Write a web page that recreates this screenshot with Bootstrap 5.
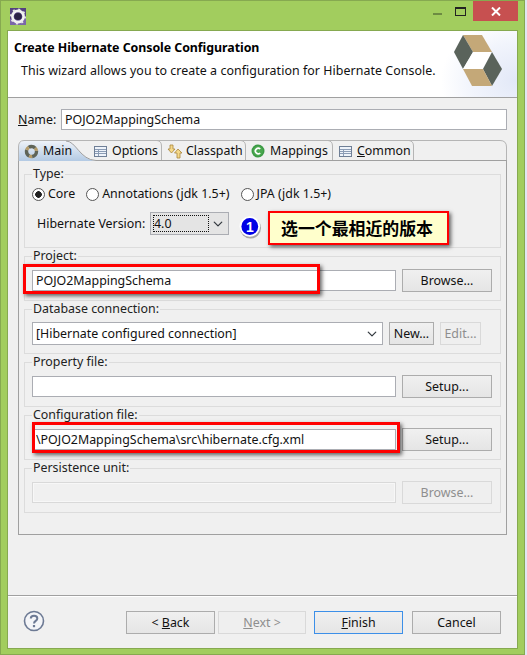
<!DOCTYPE html>
<html lang="en">
<head>
<meta charset="utf-8">
<title>Create Hibernate Console Configuration</title>
<link href="https://cdn.jsdelivr.net/npm/bootstrap@5.3.0/dist/css/bootstrap.min.css" rel="stylesheet">
<style>
html,body{margin:0;padding:0;background:#dfe6f2;overflow:hidden}
body{width:527px;height:655px;font:12.4px/16px "Noto Sans","Noto Sans CJK SC",sans-serif;color:#111}
.ewin{width:525px;height:655px;background:#a2cd5e;border:1px solid #86a950;position:relative;display:flex;flex-direction:column}
.ttl{height:29px;flex:none;display:flex;align-items:flex-start;padding-left:9px}
.ttl-ico{margin-top:7px}
.ttl-btns{margin-left:auto;display:flex;align-items:flex-start;padding-right:6px}
.tb-min{width:9px;height:2px;background:#6d8b42;margin-top:12px;margin-right:13px}
.tb-max{width:11px;height:9px;border:1px solid #222;border-top-width:2px;margin-top:6px;margin-right:7px}
.tb-close{width:45px;height:20px;background:#c75050;display:flex;align-items:center;justify-content:center}
.dlg{margin-left:6px;width:511px;height:619px;border:1px solid #86a950;background:#f0f0f0;display:flex;flex-direction:column}
.hdr{height:67px;flex:none;background:#fff;border-bottom:1px solid #a0a0a0;position:relative;padding:8px 0 0 6px}
.hdr-title{font-weight:700;line-height:18px;color:#000;font-size:12.4px;letter-spacing:-.05px;position:relative}
.hdr-desc{margin-top:5px;padding-left:7px;line-height:18px;letter-spacing:.06px;position:relative}
.hdr-art{position:absolute;right:0;top:0}
.mainp{flex:1;padding:11px 10px 0;min-height:0}
.name-row{display:flex;align-items:center;height:21px}
.name-lab{width:43px;flex:none}
.ctl{border:1px solid #abadb3;border-radius:0;height:21px;padding:0 3px;font:inherit;color:#111;background:#fff;box-shadow:none;min-height:0}
.ctl:disabled{background:#f0f0f0;border-color:#d9d9d9;box-shadow:inset 0 0 0 1px #f7f7f7}
.folder{margin-top:10px;width:489px;height:395px;position:relative;display:flex;flex-direction:column}
.tabs{height:20px;flex:none;position:relative}
.tabs-bg{position:absolute;left:0;top:0}
.tab-t{position:absolute;top:2px;display:flex;align-items:center;gap:5px;line-height:18px}
.tab-a{left:6px;gap:4px}.tab-b{left:76px}.tab-c{left:149px;gap:4px}.tab-d{left:233px}.tab-e{left:321px}
.pane{flex:1;border:1px solid #a0a0a0;border-top:0;padding:7px 5px 0;min-height:0}
.grp{border:1px solid #dcdcdc;margin:0 0 1px;padding:0 7px;height:52px;position:relative;display:block;min-width:0}
.grp>legend{float:none;width:auto;font:inherit;line-height:14px;margin:0;padding:0 1px;color:#222}
.grp-type{height:81px}
.gline{display:flex;gap:6px;align-items:center;margin-top:6px}
.gline .ctl-w{width:364px;flex:none}
.pbtn{border:1px solid #acacac;border-radius:0;background:linear-gradient(#f0f0f0,#e5e5e5);height:23px;padding:0;font:inherit;color:#111;line-height:19px;--bs-btn-hover-bg:#e5e5e5}
.pbtn:disabled{opacity:1;background:#efefef;border-color:#d9d9d9;color:#8e8e8e}
.w90{width:90px}
.radios{display:flex;align-items:center;height:18px;margin-top:4px}
.rad{display:flex;align-items:center;gap:3px;margin:0 11px 0 0;padding:0;min-height:0}
.rad .form-check-input{width:13px;height:13px;margin:0;float:none;border:1px solid #555;background-color:#fff;box-shadow:none}
.rad .form-check-input:checked{background-image:radial-gradient(circle,#222 0,#222 3px,transparent 3.6px);border-color:#555}
.hv{display:flex;align-items:center;margin-top:9px;padding-left:5px;height:23px}
.hv-lab{width:113px;flex:none}
.sel-wrap{position:relative;width:79px}
.sel-wrap::after{content:"";position:absolute;left:3px;top:3px;width:56px;height:17px;border:1px dotted #111;pointer-events:none}
.esel{border:1px solid #abadb3;border-radius:0;height:23px;padding:0 16px 0 3px;font:inherit;color:#111;box-shadow:none;background-color:#fff;background-size:12px 10px;background-position:right 4px center;min-height:0}
.sel-wrap .esel{background-color:#e4e4e4}
.dbsel{width:351px;flex:none}
.sm-new{width:45px}.sm-edit{width:41px}
.foot{height:53px;flex:none;border-top:1px solid #a0a0a0;box-shadow:inset 0 1px 0 #fff;display:flex;align-items:flex-start;padding-top:15px;padding-left:15px}
.foot>svg{margin-top:-1px}
.fbtn{width:89px}
.fbtn-next{width:88px;margin-left:3px}
.fbtn-fin{margin-left:8px}
.fbtn-can{margin-left:9px}
.fbtn-blue{border-color:#3c8fe8}
.fbtns{margin-left:auto;display:flex;padding-right:16px}
.u{text-decoration:underline}
.redbox{position:absolute;border:3px solid #f00;box-shadow:2px 2px 4px rgba(0,0,0,.6);pointer-events:none}
.rb1{left:23px;top:264px;width:297px;height:30px}
.rb2{left:32px;top:422px;width:368px;height:31px}
.callout{position:absolute;left:268px;top:211px;width:181px;height:34px;background:#ffc;border:2px solid #f00;box-shadow:2px 2px 4px rgba(0,0,0,.6);font:700 16.9px/30px "Noto Sans CJK SC",sans-serif;color:#000;padding-left:11px;white-space:nowrap}
.numdot{position:absolute;left:239px;top:215px;width:23px;height:24px}
</style>
</head>
<body>
<div class="ewin">
  <div class="ttl">
    <svg class="ttl-ico" width="16" height="17" viewBox="0 0 16 17"><rect width="16" height="17" fill="#54427f"/><rect y="11" width="16" height="6" fill="#7a66a8"/><circle cx="8" cy="8.5" r="5.6" fill="none" stroke="#f2f2f2" stroke-width="2.6"/><circle cx="8" cy="8.5" r="7" fill="none" stroke="#e8e8e8" stroke-width="2" stroke-dasharray="2 3.5"/><circle cx="8" cy="8.5" r="3.6" fill="#2a2145"/></svg>
    <div class="ttl-btns">
      <div class="tb-min"></div>
      <div class="tb-max"></div>
      <div class="tb-close"><svg width="10" height="9" viewBox="0 0 10 9"><path d="M1 .5 9 8.5M9 .5 1 8.5" stroke="#fff" stroke-width="2"/></svg></div>
    </div>
  </div>
  <div class="dlg">
    <div class="hdr">
      <svg class="hdr-art" width="80" height="66" viewBox="0 0 80 66">
        <defs><radialGradient id="hg" cx="1" cy=".75" r=".95"><stop offset="0" stop-color="#e2e8f7"/><stop offset=".6" stop-color="#f1f4fc"/><stop offset="1" stop-color="#fff"/></radialGradient></defs>
        <rect width="80" height="66" fill="url(#hg)"/>
        <g transform="translate(-437,-31)">
          <path d="M463 35H482L492 52H473Z" fill="#c4a878"/>
          <path d="M463 35 473 52 463 69 454 52Z" fill="#5a635b"/>
          <path d="M473 52H492L483 69H463Z" fill="#fff"/>
          <path d="M492 52 502 69 492 86 483 69Z" fill="#5a635b"/>
          <path d="M463 69H483L492 86H472Z" fill="#c4a878"/>
        </g>
      </svg>
      <div class="hdr-title">Create Hibernate Console Configuration</div>
      <div class="hdr-desc">This wizard allows you to create a configuration for Hibernate Console.</div>
    </div>
    <div class="mainp">
      <div class="name-row">
        <span class="name-lab"><span class="u">N</span>ame:</span>
        <input class="form-control ctl flex-fill" value="POJO2MappingSchema">
      </div>
      <div class="folder">
        <div class="tabs">
          <svg class="tabs-bg" width="489" height="21" viewBox="0 0 489 21">
            <defs><linearGradient id="tg" x1="0" y1="0" x2="0" y2="1"><stop offset="0" stop-color="#eef2f8"/><stop offset="1" stop-color="#b3cae4"/></linearGradient></defs>
            <path d="M.5 21V7Q.5 1 6 1H48C58 1 62 20 78 21Z" fill="url(#tg)"/>
            <path d="M.5 21V7Q.5 .5 6 .5H482Q488.5 .5 488.5 7V21" fill="none" stroke="#b5b5b5"/>
            <path d="M48 1C58 1 62 20 78 20.5H489" fill="none" stroke="#a0a0a0"/>
            <path d="M139 .5Q143.5 1 143.5 6V20M223 .5Q227.5 1 227.5 6V20M310 .5Q314.5 1 314.5 6V20M391 .5Q395.5 1 395.5 6V20" fill="none" stroke="#b5b5b5"/>
          </svg>
          <div class="tab-t tab-a">
            <svg width="15" height="15" viewBox="0 0 15 15"><circle cx="7.5" cy="7.5" r="5" fill="none" stroke="#5f6458" stroke-width="3.4" stroke-dasharray="7 3"/><circle cx="7.5" cy="7.5" r="5" fill="none" stroke="#b49a66" stroke-width="3.4" stroke-dasharray="3 7" stroke-dashoffset="-7"/></svg>
            <span>Main</span>
          </div>
          <div class="tab-t tab-b">
            <svg width="13" height="11" viewBox="0 0 13 11"><rect x=".5" y=".5" width="12" height="10" fill="#eef3fa" stroke="#6f7f96"/><path d="M1 3.5H12M1 5.5H12M1 7.5H12M4.5 3V10" stroke="#8b9cb5" stroke-width="1"/></svg>
            <span>Options</span>
          </div>
          <div class="tab-t tab-c">
            <svg width="15" height="15" viewBox="0 0 15 15"><path d="M3 1H6V5H8L4.500 9 1 5H3Z" fill="#f5d98a" stroke="#a9853a" stroke-width=".8"/><path d="M10 14H13V9H15L11 5 7.500 9H10Z" fill="#f5d98a" stroke="#a9853a" stroke-width=".8"/></svg>
            <span>Classpath</span>
          </div>
          <div class="tab-t tab-d">
            <svg width="14" height="14" viewBox="0 0 14 14"><circle cx="7" cy="7" r="6.500" fill="#3c9a45"/><circle cx="7" cy="7" r="5" fill="#4aa84f"/><path d="M9.200 5A2.800 2.800 0 1 0 9.200 9" fill="none" stroke="#fff" stroke-width="1.700"/></svg>
            <span>Mappings</span>
          </div>
          <div class="tab-t tab-e">
            <svg width="13" height="11" viewBox="0 0 13 11"><rect x=".5" y=".5" width="12" height="10" fill="#eef3fa" stroke="#6f7f96"/><path d="M1 3.5H12M1 5.5H12M1 7.5H12M4.5 3V10" stroke="#8b9cb5" stroke-width="1"/></svg>
            <span><span class="u">C</span>ommon</span>
          </div>
        </div>
        <div class="pane">
          <fieldset class="grp grp-type">
            <legend>Type:</legend>
            <div class="radios">
              <label class="form-check rad"><input class="form-check-input" type="radio" name="t" checked>Core</label>
              <label class="form-check rad"><input class="form-check-input" type="radio" name="t">Annotations (jdk 1.5+)</label>
              <label class="form-check rad"><input class="form-check-input" type="radio" name="t">JPA (jdk 1.5+)</label>
            </div>
            <div class="hv">
              <span class="hv-lab">Hibernate Version:</span>
              <div class="sel-wrap"><select class="form-select esel"><option>4.0</option></select></div>
            </div>
          </fieldset>
          <fieldset class="grp">
            <legend>Project:</legend>
            <div class="gline">
              <input class="form-control ctl ctl-w" value="POJO2MappingSchema">
              <button type="button" class="btn pbtn w90">Browse...</button>
            </div>
          </fieldset>
          <fieldset class="grp">
            <legend>Database connection:</legend>
            <div class="gline">
              <select class="form-select esel dbsel"><option>[Hibernate configured connection]</option></select>
              <button type="button" class="btn pbtn sm-new">New...</button>
              <button type="button" class="btn pbtn sm-edit" disabled>Edit...</button>
            </div>
          </fieldset>
          <fieldset class="grp">
            <legend>Property file:</legend>
            <div class="gline">
              <input class="form-control ctl ctl-w">
              <button type="button" class="btn pbtn w90">Setup...</button>
            </div>
          </fieldset>
          <fieldset class="grp">
            <legend>Configuration file:</legend>
            <div class="gline">
              <input class="form-control ctl ctl-w" value="\POJO2MappingSchema\src\hibernate.cfg.xml">
              <button type="button" class="btn pbtn w90">Setup...</button>
            </div>
          </fieldset>
          <fieldset class="grp">
            <legend>Persistence unit:</legend>
            <div class="gline">
              <input class="form-control ctl ctl-w" disabled>
              <button type="button" class="btn pbtn w90" disabled>Browse...</button>
            </div>
          </fieldset>
        </div>
      </div>
    </div>
    <div class="foot">
      <svg width="22" height="22" viewBox="0 0 22 22"><circle cx="11" cy="11" r="9.500" fill="#f4f5f8" stroke="#6d7a94" stroke-width="1.600"/><path d="M7.800 8.500C7.800 4.800 14.300 4.800 14.300 8.500 14.300 11 11 10.800 11 13.500" fill="none" stroke="#6d7a94" stroke-width="2"/><rect x="9.900" y="15" width="2.200" height="2.200" fill="#6d7a94"/></svg>
      <div class="fbtns">
        <button type="button" class="btn pbtn fbtn">&lt; <span class="u">B</span>ack</button>
        <button type="button" class="btn pbtn fbtn fbtn-next" disabled><span class="u">N</span>ext &gt;</button>
        <button type="button" class="btn pbtn fbtn fbtn-blue fbtn-fin"><span class="u">F</span>inish</button>
        <button type="button" class="btn pbtn fbtn fbtn-can">Cancel</button>
      </div>
    </div>
  </div>
</div>
<div class="redbox rb1"></div>
<div class="redbox rb2"></div>
<svg class="numdot" viewBox="0 0 23 24">
  <circle cx="11.500" cy="13" r="10.500" fill="#777" opacity=".6"/>
  <circle cx="10.800" cy="11.500" r="10.300" fill="#fff"/>
  <circle cx="10.800" cy="11.500" r="8.400" fill="#0000e6"/>
  <text x="10.800" y="16.500" text-anchor="middle" font-family="Liberation Sans" font-weight="700" font-size="14" fill="#fff">1</text>
</svg>
<div class="callout">选一个最相近的版本</div>
</body>
</html>
